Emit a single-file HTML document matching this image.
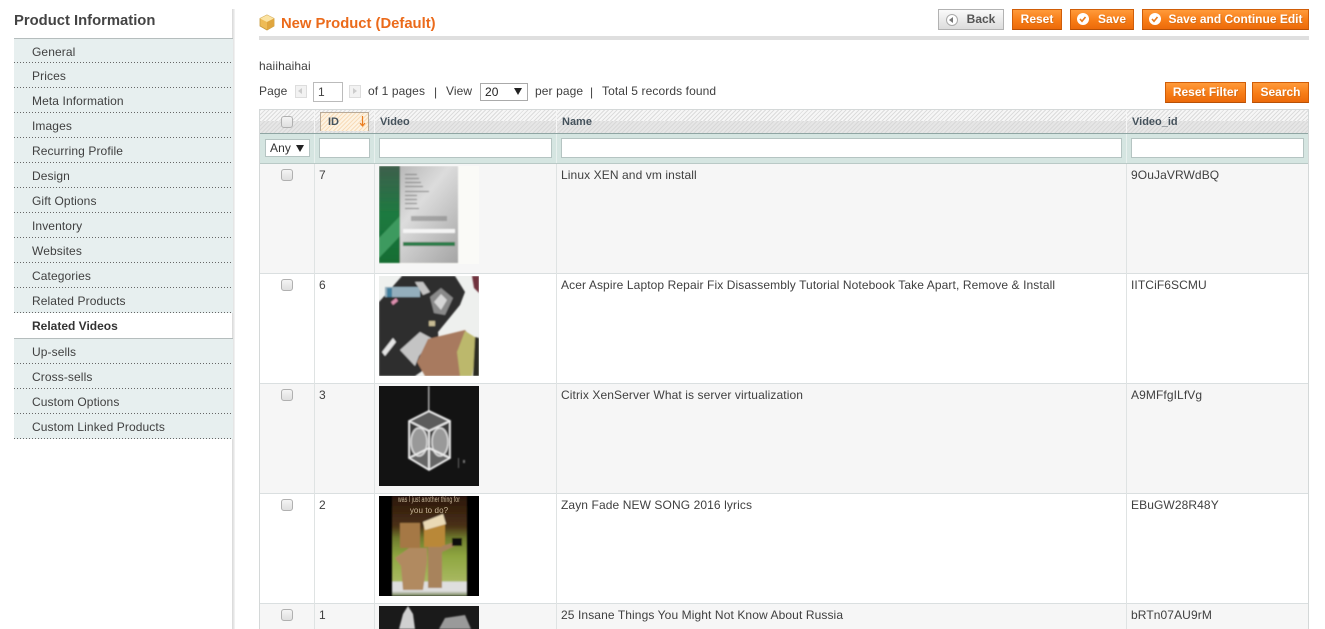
<!DOCTYPE html>
<html>
<head>
<meta charset="utf-8">
<style>
html,body{margin:0;padding:0;background:#fff}
body{width:1325px;height:629px;overflow:hidden;position:relative;font-family:"Liberation Sans",sans-serif;font-size:12px;color:#404040;letter-spacing:.1px}
.a{position:absolute;white-space:nowrap;line-height:14px}
#shadow{position:absolute;left:232px;top:9px;width:3px;height:620px;background:linear-gradient(90deg,#d8d8d8,#e8e8e8 60%,#f6f6f6)}
.nav{position:absolute;left:14px;width:219px;background:#e7efef;box-sizing:border-box;padding-left:18px;padding-top:6px;line-height:14px;color:#404040;white-space:nowrap}
.nav:after{content:"";position:absolute;left:0;right:0;bottom:0;height:1px;background:repeating-linear-gradient(90deg,#666 0 1px,transparent 1px 3px)}
.btn{position:absolute;top:9px;height:21px;box-sizing:border-box;background:linear-gradient(#ff9a3a,#f77c16 55%,#ec6a0a);border:1px solid #d05d08;border-bottom-color:#b85006;color:#fff;font-weight:bold;font-size:12px;line-height:18px;text-align:center;text-shadow:1px 1px 0 #d9701a;white-space:nowrap;letter-spacing:0}
.chk{position:absolute;left:6px;top:3px;width:12px;height:12px;border-radius:50%;background:#fff}
.row{position:absolute;left:260px;width:1048px;height:109px;border-bottom:1px solid #dadfe0}
.odd{background:#f6f6f6}
.v{position:absolute;top:0;width:1px;background:#dfe3e3}
.w{position:absolute;top:110px;height:23px;width:1px;background:#f6f6f6}
.f{position:absolute;top:134px;height:29px;width:1px;background:#e8f0ee}
.cb{position:absolute;left:281px;width:10px;height:10px;border:1px solid #b0b0b0;border-radius:3px;background:linear-gradient(#f4f4f4,#dfdfdf)}
.in{position:absolute;top:138px;height:20px;box-sizing:border-box;background:#fff;border:1px solid #b5c4c2}
.hl{position:absolute;font-weight:bold;font-size:11px;color:#45525c;line-height:14px;white-space:nowrap;letter-spacing:0}
svg.t{position:absolute;left:379px;width:100px;overflow:hidden}
</style>
</head>
<body>
<div class="a" style="left:14px;top:13px;font-size:14.800px;line-height:16px;font-weight:bold;color:#444;letter-spacing:0">Product Information</div>
<div id="shadow"></div>
<div style="position:absolute;left:14px;top:38px;width:219px;height:1px;background:#b5bdbd"></div>
<div class="nav" style="top:39px;height:24px">General</div>
<div class="nav" style="top:63px;height:25px">Prices</div>
<div class="nav" style="top:88px;height:25px">Meta Information</div>
<div class="nav" style="top:113px;height:25px">Images</div>
<div class="nav" style="top:138px;height:25px">Recurring Profile</div>
<div class="nav" style="top:163px;height:25px">Design</div>
<div class="nav" style="top:188px;height:25px">Gift Options</div>
<div class="nav" style="top:213px;height:25px">Inventory</div>
<div class="nav" style="top:238px;height:25px">Websites</div>
<div class="nav" style="top:263px;height:25px">Categories</div>
<div class="nav" style="top:288px;height:25px">Related Products</div>
<div class="a" style="left:32px;top:319px;font-weight:bold;color:#333;letter-spacing:0">Related Videos</div>
<div style="position:absolute;left:14px;top:338px;width:219px;height:1px;background:#b5bdbd"></div>
<div class="nav" style="top:339px;height:25px">Up-sells</div>
<div class="nav" style="top:364px;height:25px">Cross-sells</div>
<div class="nav" style="top:389px;height:25px">Custom Options</div>
<div class="nav" style="top:414px;height:25px">Custom Linked Products</div>

<svg style="position:absolute;left:259px;top:14px" width="16" height="17" viewBox="0 0 16 17">
<path d="M8 1 15 4.500V12L8 16 1 12V4.500Z" fill="#eebb55" stroke="#c89a3c" stroke-width=".8"/>
<path d="M1 4.500 8 8 15 4.500 8 1Z" fill="#fbe3a2"/><path d="M8 8V16L15 12V4.500Z" fill="#e0a63e"/>
</svg>
<div class="a" style="left:281px;top:15px;font-size:14.800px;line-height:18px;font-weight:bold;color:#eb6a1a;letter-spacing:0">New Product (Default)</div>
<div style="position:absolute;left:259px;top:36px;width:1050px;height:4px;background:#dfdfdf"></div>

<div class="btn" style="left:938px;width:66px;background:linear-gradient(#fafafa,#dcdcdc);border-color:#b2b2b2;color:#555;text-shadow:none;padding-left:20px">Back
<span style="position:absolute;left:7px;top:4px;width:10px;height:10px;border:1px solid #aaa;border-radius:50%;background:#fff"></span>
<span style="position:absolute;left:10px;top:7px;border:3px solid transparent;border-right:4px solid #777;border-left:0"></span></div>
<div class="btn" style="left:1012px;width:50px">Reset</div>
<div class="btn" style="left:1070px;width:64px;padding-left:20px">Save<span class="chk"></span>
<svg style="position:absolute;left:6px;top:3px" width="12" height="12"><path d="M3 6 5 8.300 8.500 4" fill="none" stroke="#e8791c" stroke-width="1.600"/></svg></div>
<div class="btn" style="left:1142px;width:167px;padding-left:20px">Save and Continue Edit<span class="chk"></span>
<svg style="position:absolute;left:6px;top:3px" width="12" height="12"><path d="M3 6 5 8.300 8.500 4" fill="none" stroke="#e8791c" stroke-width="1.600"/></svg></div>

<div class="a" style="left:259px;top:59px">haiihaihai</div>
<div class="a" style="left:259px;top:84px">Page</div>
<div style="position:absolute;left:295px;top:85px;width:10px;height:11px;border:1px solid #ddd;background:#f2f2f2"></div>
<div style="position:absolute;left:298px;top:88px;border:3px solid transparent;border-right:4px solid #ccc;border-left:0"></div>
<div style="position:absolute;left:313px;top:82px;width:30px;height:20px;box-sizing:border-box;border:1px solid #bbb;padding-left:4px;line-height:19px">1</div>
<div style="position:absolute;left:349px;top:85px;width:10px;height:11px;border:1px solid #ddd;background:#f2f2f2"></div>
<div style="position:absolute;left:353px;top:88px;border:3px solid transparent;border-left:4px solid #ccc;border-right:0"></div>
<div class="a" style="left:368px;top:84px">of 1 pages</div>
<div class="a" style="left:434px;top:85px">|</div>
<div class="a" style="left:446px;top:84px">View</div>
<div style="position:absolute;left:480px;top:83px;width:48px;height:18px;box-sizing:border-box;border:1px solid #aaa;padding-left:4px;line-height:17px;color:#222">20</div>
<div style="position:absolute;left:514px;top:88px;border:4px solid transparent;border-top:7px solid #222;border-bottom:0"></div>
<div class="a" style="left:535px;top:84px">per page</div>
<div class="a" style="left:590px;top:85px">|</div>
<div class="a" style="left:602px;top:84px">Total 5 records found</div>
<div class="btn" style="left:1165px;top:82px;width:81px">Reset Filter</div>
<div class="btn" style="left:1252px;top:82px;width:57px">Search</div>

<!-- Rows -->
<div class="row odd" style="top:164px"></div>
<div class="row" style="top:274px"></div>
<div class="row odd" style="top:384px"></div>
<div class="row" style="top:494px"></div>
<div class="row odd" style="top:604px;border-bottom:0;height:25px"></div>
<div class="v" style="left:314px;top:164px;height:465px"></div>
<div class="v" style="left:374px;top:164px;height:465px"></div>
<div class="v" style="left:556px;top:164px;height:465px"></div>
<div class="v" style="left:1126px;top:164px;height:465px"></div>

<!-- Table header -->
<div style="position:absolute;left:260px;top:110px;width:1048px;height:11px;background:repeating-linear-gradient(135deg,#dcdcdc 0 1px,#f6f6f6 1px 3px)"></div>
<div style="position:absolute;left:260px;top:121px;width:1048px;height:12px;background:repeating-linear-gradient(135deg,#d8d8d8 0 1px,#e6e6e6 1px 3px)"></div>
<div style="position:absolute;left:260px;top:133px;width:1048px;height:1px;background:#8fa5a3"></div>
<div style="position:absolute;left:260px;top:134px;width:1048px;height:29px;background:#d5e5e1;border-bottom:1px solid #b9c9c6"></div>
<div class="w" style="left:314px"></div><div class="w" style="left:374px"></div><div class="w" style="left:556px"></div><div class="w" style="left:1126px"></div>
<div class="f" style="left:314px"></div><div class="f" style="left:374px"></div><div class="f" style="left:556px"></div><div class="f" style="left:1126px"></div>

<div style="position:absolute;left:320px;top:112px;width:49px;height:19px;box-sizing:border-box;border:1px solid #b9aa98;border-bottom:0;background:repeating-linear-gradient(135deg,#f8dcb9 0 1px,#fdf3e3 1px 3px)"></div>
<div class="hl" style="left:328px;top:115px">ID</div>
<svg style="position:absolute;left:358px;top:115px" width="9" height="13"><path d="M4.500 1V11M2 8l2.500 3L7 8" fill="none" stroke="#ea7b1d" stroke-width="1.200"/></svg>
<div class="hl" style="left:380px;top:115px">Video</div>
<div class="hl" style="left:562px;top:115px">Name</div>
<div class="hl" style="left:1132px;top:115px">Video_id</div>
<div class="cb" style="top:116px"></div>

<div style="position:absolute;left:265px;top:139px;width:45px;height:18px;box-sizing:border-box;background:#fff;border:1px solid #b5c4c2;padding-left:4px;line-height:16px;color:#333">Any</div>
<div style="position:absolute;left:296px;top:145px;border:4px solid transparent;border-top:7px solid #222;border-bottom:0"></div>
<div class="in" style="left:319px;width:51px"></div>
<div class="in" style="left:379px;width:173px"></div>
<div class="in" style="left:561px;width:561px"></div>
<div class="in" style="left:1131px;width:173px"></div>

<div style="position:absolute;left:259px;top:109px;width:1050px;height:520px;border:1px solid #d4d8d8;border-bottom:0;box-sizing:border-box"></div>

<div class="cb" style="top:169px"></div><div class="a" style="left:319px;top:168px">7</div>
<div class="a" style="left:561px;top:168px">Linux XEN and vm install</div><div class="a" style="left:1131px;top:168px">9OuJaVRWdBQ</div>
<div class="cb" style="top:279px"></div><div class="a" style="left:319px;top:278px">6</div>
<div class="a" style="left:561px;top:278px">Acer Aspire Laptop Repair Fix Disassembly Tutorial Notebook Take Apart, Remove &amp; Install</div><div class="a" style="left:1131px;top:278px">IITCiF6SCMU</div>
<div class="cb" style="top:389px"></div><div class="a" style="left:319px;top:388px">3</div>
<div class="a" style="left:561px;top:388px">Citrix XenServer What is server virtualization</div><div class="a" style="left:1131px;top:388px">A9MFfgILfVg</div>
<div class="cb" style="top:499px"></div><div class="a" style="left:319px;top:498px">2</div>
<div class="a" style="left:561px;top:498px">Zayn Fade NEW SONG 2016 lyrics</div><div class="a" style="left:1131px;top:498px">EBuGW28R48Y</div>
<div class="cb" style="top:609px"></div><div class="a" style="left:319px;top:608px">1</div>
<div class="a" style="left:561px;top:608px">25 Insane Things You Might Not Know About Russia</div><div class="a" style="left:1131px;top:608px">bRTn07AU9rM</div>

<!-- Thumbnails -->
<svg class="t" style="top:166px" width="100" height="98" viewBox="0 0 100 98">
<defs>
<filter id="b"><feGaussianBlur stdDeviation=".7"/></filter>
<linearGradient id="g1" x1="0" y1="0" x2="1" y2="1"><stop offset="0" stop-color="#a8a8a8"/><stop offset=".45" stop-color="#dcdcdc"/><stop offset="1" stop-color="#a4a4a4"/></linearGradient>
<linearGradient id="g2" x1="0" y1="0" x2="0" y2="1"><stop offset="0" stop-color="#3d5f4c"/><stop offset=".5" stop-color="#1d7a40"/><stop offset="1" stop-color="#126c32"/></linearGradient>
</defs>
<rect width="100" height="98" fill="#fafaf7"/>
<g filter="url(#b)">
<rect y="0" width="79" height="97" fill="url(#g1)"/><rect y="0" width="21" height="97" fill="url(#g2)"/>
<path d="M0 72 21 50V70L0 92Z" fill="#3d9a5e"/>
<rect x="24" y="63" width="52" height="4" fill="#f4f4f4"/><rect x="24" y="76" width="52" height="4" fill="#2c7b4a"/>
<g fill="#777"><rect x="26" y="8" width="12" height="1"/><rect x="26" y="12" width="14" height="1"/><rect x="26" y="16" width="16" height="1"/><rect x="26" y="20" width="18" height="1"/><rect x="26" y="25" width="24" height="1"/><rect x="26" y="29" width="12" height="1"/><rect x="26" y="33" width="12" height="1"/><rect x="26" y="37" width="12" height="1"/><rect x="26" y="42" width="14" height="1"/><rect x="32" y="50" width="36" height="5" opacity=".5"/></g>
</g>
</svg>
<svg class="t" style="top:276px" width="100" height="100" viewBox="0 0 100 100">
<rect width="100" height="100" fill="#eef0ee"/>
<g filter="url(#b)">
<path d="M0 26 23 0H76L86 16 81 29 59 56 60 70 46 93 36 100H0Z" fill="#2d2d2e"/>
<path d="M21 74 41 56 54 63 40 80 36 90Z" fill="#c4c4c4"/>
<path d="M51 21 62 12 74 22 66 39 55 37Z" fill="#8a8a8a"/><path d="M55 26 62 18 68 24 62 34Z" fill="#d6d6d6"/>
<path d="M38 86 49 63 86 54 96 66 91 100H46Z" fill="#a87a5e"/>
<path d="M78 76 86 55 99 63 93 100H81Z" fill="#bcb86c"/>
<path d="M96 61 100 62V100H94Z" fill="#2a2a24"/>
<rect x="6" y="11" width="35" height="10" fill="#94aebc"/><rect x="8" y="12" width="5" height="9" fill="#3f7e9c"/><path d="M12 26 17 22 19 25 14 29Z" fill="#dd8fae"/>
<path d="M36 6 44 6 51 16 44 19Z" fill="#c4c4c4"/>
<path d="M3 76 14 62 17 66 6 80Z" fill="#e4e4e4"/>
<rect x="50" y="45" width="6" height="5" fill="#c8bc94"/>
<path d="M93 0H100V17L95 12Z" fill="#70323c"/>
</g>
</svg>
<svg class="t" style="top:386px" width="100" height="100" viewBox="0 0 100 100">
<rect width="100" height="100" fill="#131313"/>
<g filter="url(#b)">
<rect x="49" y="0" width="1.500" height="26" fill="#aaa"/>
<path d="M50 25 71 35V72L50 84 30 72V35Z" fill="#3a3a3a"/>
<path d="M30 35 50 25 71 35 50 45Z" fill="#5c5c5c"/>
<path d="M30 72 50 62 71 72 50 84Z" fill="#666"/>
<ellipse cx="40" cy="56" rx="8" ry="14" fill="#999" stroke="#ddd" stroke-width="1.500"/><ellipse cx="61" cy="56" rx="8" ry="14" fill="#999" stroke="#ddd" stroke-width="1.500"/>
<path d="M30 35 50 25 71 35V72L50 84 30 72ZM30 35 50 45 71 35M50 45V84M30 72 50 62 71 72" fill="none" stroke="#eee" stroke-width="1.800"/>
<rect x="79" y="72" width="1" height="10" fill="#666"/><rect x="84" y="74" width="2" height="3" fill="#777"/>
</g>
</svg>
<svg class="t" style="top:496px" width="100" height="100" viewBox="0 0 100 100">
<defs><linearGradient id="g3" x1="0" y1="0" x2="0" y2="1"><stop offset="0" stop-color="#2a170c"/><stop offset=".3" stop-color="#4a3015"/><stop offset=".42" stop-color="#6e7a2c"/><stop offset=".6" stop-color="#8ea640"/><stop offset=".85" stop-color="#a8b860"/><stop offset=".86" stop-color="#dedede"/><stop offset=".95" stop-color="#dedede"/><stop offset="1" stop-color="#6f8050"/></linearGradient></defs>
<rect width="100" height="100" fill="#000"/>
<g filter="url(#b)">
<rect x="13" y="0" width="75" height="100" fill="url(#g3)"/>
<rect x="21" y="27" width="20" height="25" fill="#a57844"/>
<rect x="45" y="26" width="21" height="25" fill="#b98838"/><path d="M44 26 64 18 67 28 46 34Z" fill="#ead9b5"/>
<path d="M16 62 30 52H48V66L44 94H24L22 70Z" fill="#b18a60"/>
<rect x="49" y="51" width="14" height="41" fill="#a8835c"/>
<path d="M63 50 76 46 76 50 63 56Z" fill="#a8835c"/>
<rect x="73" y="42" width="10" height="8" fill="#111"/>
</g>
<text x="50" y="6" font-size="8" fill="#c8b69a" text-anchor="middle" font-family="Liberation Sans" textLength="62" lengthAdjust="spacingAndGlyphs">was I just another thing for</text>
<text x="50" y="17" font-size="8" fill="#c8b69a" text-anchor="middle" font-family="Liberation Sans">you to do?</text>
</svg>
<svg class="t" style="top:606px" width="100" height="23" viewBox="0 0 100 23">
<rect width="100" height="23" fill="#1a1a1a"/>
<g filter="url(#b)"><path d="M20 23 24 8 29 0 34 8 36 23Z" fill="#d0d0d0"/><path d="M60 23 66 12 86 9 92 23Z" fill="#9a9a9a"/></g>
</svg>
</body>
</html>
